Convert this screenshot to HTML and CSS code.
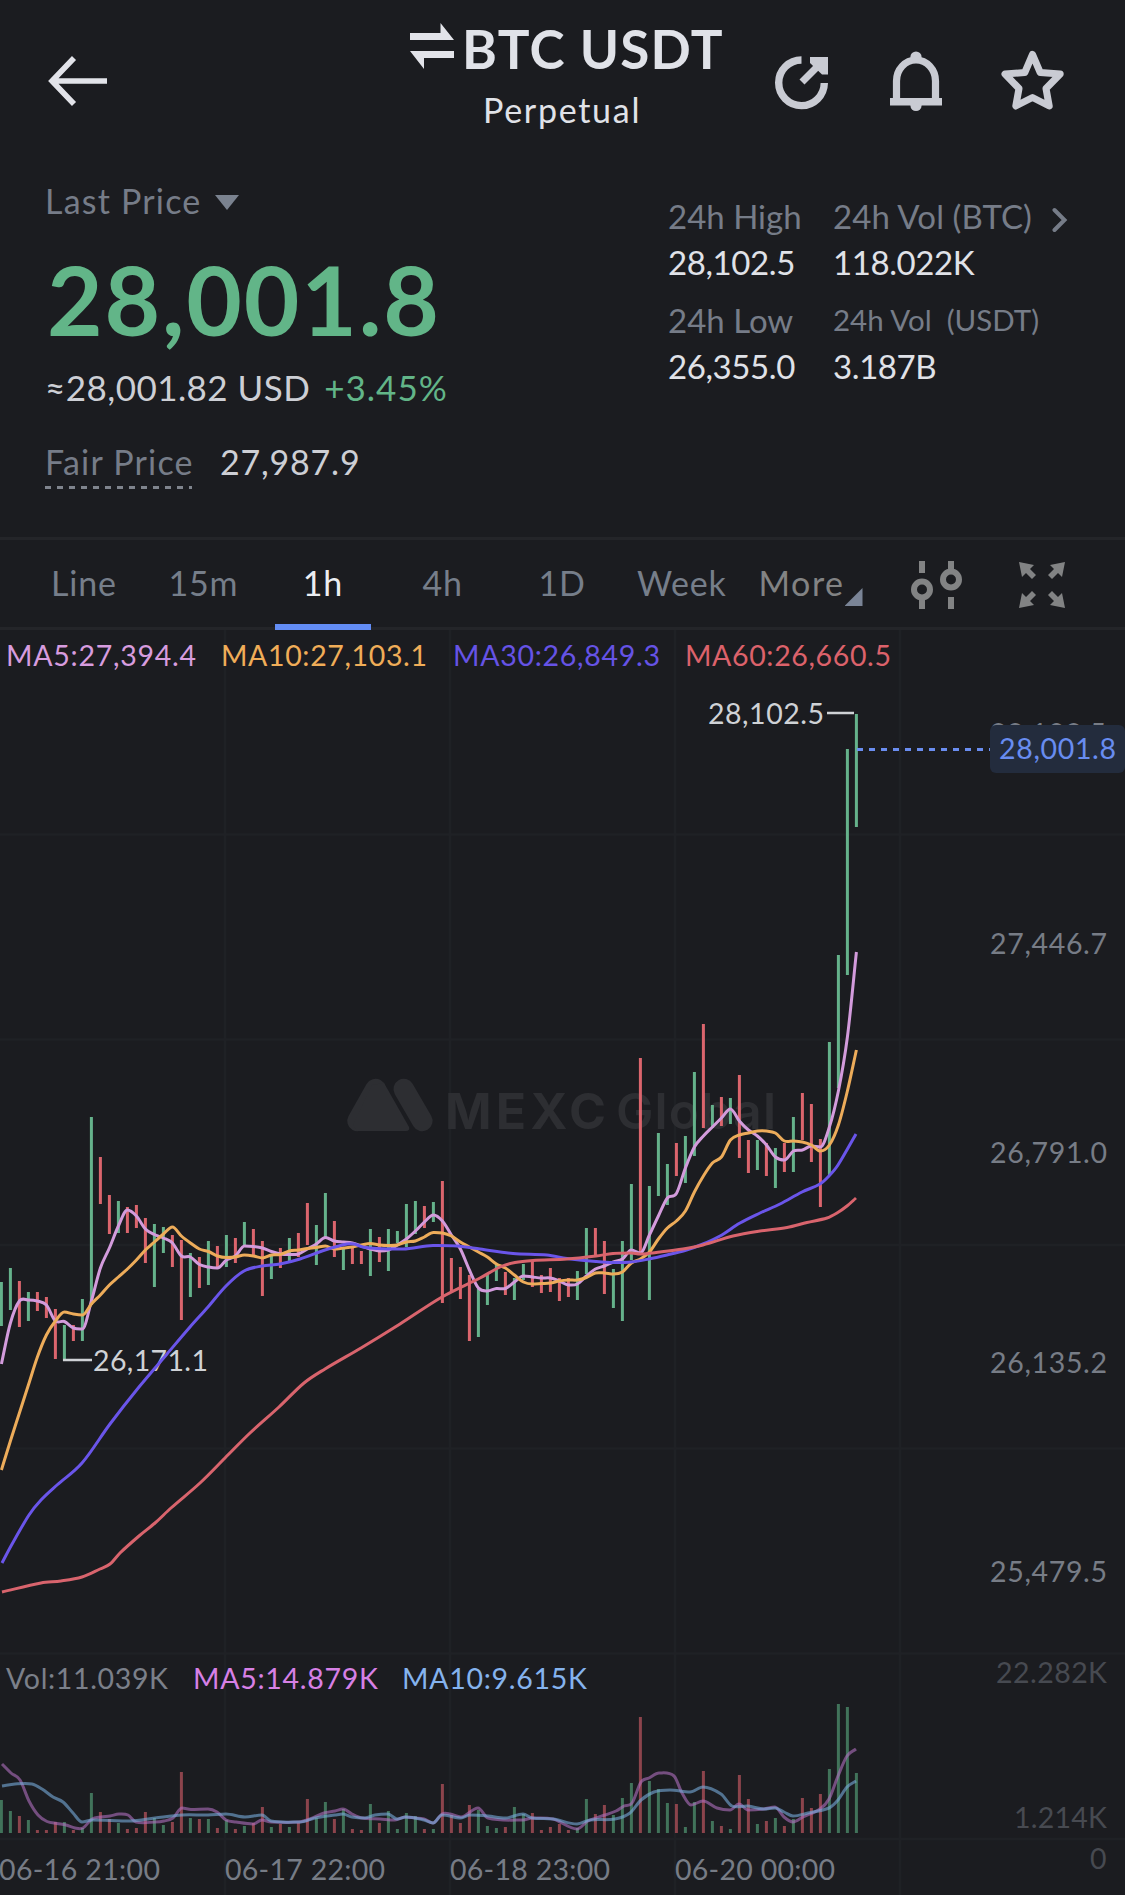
FILE: index.html
```html
<!DOCTYPE html>
<html lang="en">
<head>
	<meta charset="UTF-8">
	<title>BTC USDT Perpetual</title>
	<link rel="stylesheet" href="styles.css">
</head>
<body>
	<header class="header">
		<svg class="back" width="60" height="52" viewBox="48 55 60 52">
			<path d="M107 81H53M74 58L52 81l22 23" fill="none" stroke="#e2e3e9" stroke-width="5.6"/>
		</svg>
		<div class="title">
			<h1>
				<svg class="swap" width="44" height="46" viewBox="410 23 44 46">
					<path d="M410 33h30.500V23L454 40H410zM454 58h-30v11L410 51h44z" fill="#e2e3e9"/>
				</svg>
				<span>BTC USDT</span>
			</h1>
			<p>Perpetual</p>
		</div>
		<div class="icons">
			<svg width="54" height="62" viewBox="775 50 54 62">
				<path d="M801.500 60A22.800 22.800 0 1 0 824.300 83" fill="none" stroke="#c9cbd3" stroke-width="7.400"/>
				<path d="M802 82l20-20" stroke="#c9cbd3" stroke-width="7"/>
				<path d="M810 57h18v17.500h-6L810 63z" fill="#c9cbd3"/>
			</svg>
			<svg width="52" height="62" viewBox="890 50 52 62">
				<path d="M896.500 100V81a19.500 21 0 0 1 39 0v19" fill="none" stroke="#c9cbd3" stroke-width="7.200"/>
				<path d="M890 98h52v7.500h-52z" fill="#c9cbd3"/>
				<circle cx="916" cy="57" r="5.600" fill="#c9cbd3"/>
				<circle cx="916" cy="105.500" r="5.600" fill="#c9cbd3"/>
			</svg>
			<svg width="64" height="62" viewBox="1000 50 64 62">
				<path d="M1032.500 54.500l7.700 18 20 1.500-14.200 14.500 3.200 17.500-16.700-8.500-16.700 8.500 3.200-17.500L1005 74l19.800-1.500z" fill="none" stroke="#c9cbd3" stroke-width="7" stroke-linejoin="round"/>
			</svg>
		</div>
	</header>

	<section class="summary">
		<div class="price">
			<div class="last">Last Price <i class="arrow-down"></i></div>
			<div class="big">28,001.8</div>
			<div class="approx"><span>≈28,001.82 USD</span><span class="up">+3.45%</span></div>
			<div class="fair"><span class="label">Fair Price</span><span class="value">27,987.9</span></div>
		</div>
		<dl class="stats">
			<div>
				<dt>24h High</dt>
				<dd>28,102.5</dd>
				<dt>24h Low</dt>
				<dd>26,355.0</dd>
			</div>
			<div>
				<dt class="vol">24h Vol (BTC)
					<svg class="chevron" width="16" height="26" viewBox="0 0 16 26"><path d="M2.500 3l10 10-10 10" fill="none" stroke="#767c88" stroke-width="4" stroke-linecap="round"/></svg>
				</dt>
				<dd>118.022K</dd>
				<dt class="small">24h Vol&nbsp; (USDT)</dt>
				<dd>3.187B</dd>
			</div>
		</dl>
	</section>

	<nav class="tabs">
		<a class="tab">Line</a>
		<a class="tab">15m</a>
		<a class="tab active">1h</a>
		<a class="tab">4h</a>
		<a class="tab">1D</a>
		<a class="tab">Week</a>
		<a class="more">More<i class="corner"></i></a>
		<svg class="sliders" width="52" height="50" viewBox="910 560 52 50">
			<g fill="none" stroke="#828384" stroke-width="6">
				<path d="M921 561v12M921 599v10M950 561v9M950 597v12"/>
				<circle cx="921" cy="589.500" r="8"/>
				<circle cx="950" cy="579.500" r="8"/>
			</g>
		</svg>
		<svg class="expand" width="46" height="46" viewBox="0 0 46 46">
			<g fill="#828384">
				<path id="corner" d="M0 0l15 3-4 4 6 6-4 4-6-6-4 4z"/>
				<use href="#corner" transform="matrix(-1 0 0 1 46 0)"/>
				<use href="#corner" transform="matrix(1 0 0 -1 0 46)"/>
				<use href="#corner" transform="matrix(-1 0 0 -1 46 46)"/>
			</g>
		</svg>
	</nav>

	<svg class="chart" width="1125" height="1265" viewBox="0 630 1125 1265">
		<path class="grid" d="M0 834.500H1125M0 1039.500H1125M0 1245H1125M0 1448.500H1125M0 1653.500H1125M0 1839H1125M225 630V1895M450 630V1895M675 630V1895M900 630V1895"/>

		<g class="watermark">
			<path d="M375.500 1089L357.500 1121M403.700 1089l18.600 32" stroke-width="20.500" stroke-linecap="round"/>
			<path d="M384 1083l25 44q1 4-3 4h-49l-4-6 19-40z" stroke="none"/>
			<text x="445" y="1129" textLength="161">MEXC</text>
			<text class="regular" x="616" y="1129" textLength="160">Global</text>
		</g>

		<g id="candles"></g>
		<path class="callout" d="M63 1360H92M827 713H854"/>
		<g class="mark">
			<text x="93" y="1370.500" textLength="115">26,171.1</text>
			<text x="708" y="724" textLength="116">28,102.5</text>
		</g>
		<g id="lines"></g>

		<g class="legend">
			<text x="6" y="665.500" textLength="190" fill="#d79cdf">MA5:27,394.4</text>
			<text x="221" y="665.500" textLength="206" fill="#f0ad58">MA10:27,103.1</text>
			<text x="453" y="665.500" textLength="207" fill="#6653e6">MA30:26,849.3</text>
			<text x="685" y="665.500" textLength="206" fill="#dc626b">MA60:26,660.5</text>
			<text x="6" y="1689" textLength="162" fill="#7b808a">Vol:11.039K</text>
			<text x="193" y="1689" textLength="185" fill="#d780e6">MA5:14.879K</text>
			<text x="402" y="1689" textLength="185" fill="#85b3ee">MA10:9.615K</text>
		</g>

		<g class="axis">
			<text x="990" y="744" textLength="116">28,102.5</text>
			<text x="990" y="954" textLength="117">27,446.7</text>
			<text x="990" y="1163" textLength="117">26,791.0</text>
			<text x="990" y="1373" textLength="117">26,135.2</text>
			<text x="990" y="1582" textLength="117">25,479.5</text>
			<g class="dim">
				<text x="996" y="1683" textLength="111">22.282K</text>
				<text x="1014" y="1828" textLength="93">1.214K</text>
				<text x="1090" y="1869">0</text>
			</g>
			<text x="-1" y="1879.500" textLength="161">06-16 21:00</text>
			<text x="225" y="1879.500" textLength="160">06-17 22:00</text>
			<text x="450" y="1879.500" textLength="160">06-18 23:00</text>
			<text x="675" y="1879.500" textLength="160">06-20 00:00</text>
		</g>

		<g class="current">
			<path d="M857 749.500H990"/>
			<rect x="990" y="725" width="135" height="48" rx="6"/>
			<text x="999" y="759" textLength="117">28,001.8</text>
		</g>
	</svg>
	<script src="chart.js"></script>
</body>
</html>
```

FILE: styles.css
```css
* {
	margin: 0;
	padding: 0;
	box-sizing: border-box;
}
body {
	width: 1125px;
	height: 1895px;
	overflow: hidden;
	background: #1b1c20;
	color: #e0e2e8;
	font-family: Lato, "Open Sans", sans-serif;
	font-size: 34px;
}
svg {
	display: block;
	flex: none;
}

/* header */
.header {
	height: 150px;
	display: grid;
	grid-template-columns: 362px 314px 1fr;
	padding-left: 48px;
}
.back {
	margin-top: 55px;
}
.title {
	padding-top: 17px;
}
.title h1 {
	display: flex;
	font-size: 53px;
	line-height: 64px;
	white-space: nowrap;
	letter-spacing: 1.2px;
}
.title .swap {
	margin: 6px 8px 0 0;
}
.title p {
	margin-top: 7px;
	padding-left: 73px;
	line-height: 44px;
	letter-spacing: 1.7px;
}
.icons {
	display: flex;
	padding: 50px 0 0 51px;
}
.icons svg + svg {
	margin-left: 61px;
}
.icons svg + svg + svg {
	margin-left: 58px;
}

/* price summary */
.summary {
	height: 387px;
	display: flex;
	padding-left: 45px;
}
.price {
	width: 623px;
	padding-top: 28px;
	color: #cdcfd5;
}
.last {
	display: flex;
	align-items: center;
	height: 44px;
	color: #767c88;
	letter-spacing: 1.2px;
}
.arrow-down {
	margin: 4px 0 0 14px;
	border: 12px solid transparent;
	border-top: 15px solid #7a828f;
	border-bottom: 0;
}
.big {
	margin: 27px 0 0 2px;
	font-size: 96px;
	font-weight: bold;
	line-height: 100px;
	letter-spacing: 1.800px;
	color: #62b588;
}
.approx {
	display: flex;
	margin-top: 16px;
	font-size: 35px;
	line-height: 44px;
	letter-spacing: 0.450px;
}
.approx .up {
	margin-left: 14px;
	letter-spacing: 1px;
	color: #62b588;
}
.fair {
	display: flex;
	margin-top: 31px;
	line-height: 44px;
}
.fair .label {
	width: 147px;
	height: 49px;
	margin-right: 28px;
	color: #767c88;
	letter-spacing: 1.200px;
	white-space: nowrap;
	background: repeating-linear-gradient(90deg, #7f848d 0, #7f848d 6px, transparent 6px, transparent 12px) 0 100% / 100% 3px no-repeat;
}
.fair .value {
	letter-spacing: 0.800px;
}
.stats {
	display: flex;
	padding-top: 46px;
	font-size: 33px;
	line-height: 40px;
	white-space: nowrap;
}
.stats > div {
	width: 165px;
}
.stats dt {
	color: #767c88;
}
.stats dd {
	margin: 6px 0 18px;
	letter-spacing: -0.400px;
}
.stats .vol {
	display: flex;
	letter-spacing: 0.100px;
}
.stats .chevron {
	margin: 11px 0 0 20px;
}
.stats .small {
	font-size: 29.500px;
}

/* interval tabs */
.tabs {
	height: 93px;
	display: flex;
	padding-left: 24px;
	border-top: 3px solid #242529;
	border-bottom: 3px solid #242529;
	line-height: 86px;
	color: #767e8a;
}
.tab {
	width: 119.600px;
	height: 90px;
	text-align: center;
	letter-spacing: 0.800px;
}
.tab.active {
	color: #eceef2;
	background: linear-gradient(#638df5, #638df5) center bottom / 96px 6px no-repeat;
}
.more {
	display: flex;
	width: 152px;
	margin-left: 17px;
	color: #828384;
	letter-spacing: 1.500px;
}
.corner {
	width: 18px;
	height: 18px;
	margin-top: 48px;
	background: #7a8496;
	clip-path: polygon(100% 0, 100% 100%, 0 100%);
}
.sliders {
	margin-top: 20px;
}
.expand {
	margin: 22px 0 0 56px;
}

/* chart */
.chart text {
	font-size: 28.500px;
}
.grid {
	fill: none;
	stroke: #1f2125;
	stroke-width: 2.500;
}
.watermark {
	fill: #2d2e32;
	stroke: #2d2e32;
}
.chart .watermark text {
	font-family: Inter, sans-serif;
	font-size: 50px;
	font-weight: 700;
	stroke: none;
}
.chart .watermark .regular {
	font-weight: 600;
}
.callout {
	stroke: #cfd2d6;
	stroke-width: 2.500;
}
.mark {
	fill: #cfd2d6;
}
.axis {
	fill: #777c86;
}
.axis .dim {
	fill: #474a51;
}
.line {
	fill: none;
	stroke-width: 3;
	stroke-linejoin: round;
}
.faded {
	opacity: 0.6;
}
.current path {
	stroke: #6a8df0;
	stroke-width: 3;
	stroke-dasharray: 6 6;
}
.current rect {
	fill: #232c3d;
}
.current text {
	fill: #688cf0;
}
```

FILE: chart.js
```js
// one row per hour: colour, high y, low y, top of the volume bar
const bars = `g 1282 1326 1800,g 1268 1310 1811,r 1281 1327 1816,g 1292 1321 1820,r 1292 1311 1830,r 1297 1318 1830,r 1309 1359 1822,g 1325 1361 1822
r 1325 1341 1830,g 1299 1341 1828,g 1117 1305 1793,r 1157 1204 1812,r 1195 1234 1819,g 1201 1233 1823,r 1207 1233 1829,r 1205 1228 1828
r 1218 1263 1812,g 1224 1287 1818,g 1227 1253 1825,r 1235 1267 1822,r 1240 1320 1772,g 1253 1297 1818,r 1257 1288 1819,g 1241 1285 1819
r 1246 1267 1828,g 1235 1267 1820,r 1238 1263 1829,g 1222 1245 1826,r 1229 1255 1823,r 1241 1296 1807,g 1255 1279 1827,r 1248 1268 1824
g 1238 1263 1827,r 1233 1257 1823,r 1203 1245 1799,g 1225 1265 1818,g 1193 1237 1802,r 1221 1257 1819,g 1248 1270 1809,r 1247 1264 1829
r 1251 1264 1830,g 1229 1276 1804,r 1237 1262 1823,g 1229 1271 1811,g 1231 1243 1829,g 1204 1247 1813,g 1201 1234 1816,r 1206 1228 1829
g 1202 1222 1829,r 1181 1303 1784,r 1258 1291 1815,r 1267 1299 1823,r 1275 1341 1805,g 1289 1337 1810,g 1274 1305 1826,g 1265 1281 1828
r 1272 1295 1827,g 1278 1300 1807,g 1264 1280 1814,r 1260 1287 1813,r 1275 1293 1830,r 1268 1292 1827,r 1278 1301 1824,r 1278 1297 1830
g 1271 1300 1828,g 1228 1274 1799,r 1228 1256 1814,r 1241 1294 1805,g 1269 1308 1815,g 1241 1321 1798,g 1184 1260 1783,r 1058 1255 1717
g 1186 1300 1781,g 1133 1196 1789,g 1164 1205 1803,r 1143 1176 1804,g 1136 1183 1827,g 1072 1156 1802,r 1024 1128 1771,g 1105 1128 1821
r 1097 1126 1826,g 1098 1124 1829,r 1075 1158 1775,r 1140 1173 1799,g 1140 1170 1824,r 1143 1176 1821,g 1148 1188 1818,r 1143 1172 1826
g 1117 1172 1819,r 1093 1140 1798,r 1104 1162 1808,r 1139 1207 1794,g 1042 1176 1769,g 955 1088 1704,g 749 975 1707,g 714 827 1773`.split(/[,\n]/);

const ma5 = [1364, 1323, 1301, 1300, 1301, 1305, 1321, 1321.5, 1328, 1329, 1301, 1268, 1248, 1226, 1210, 1216, 1229, 1234.5, 1238, 1243, 1256, 1257, 1264.5, 1267, 1268, 1260, 1256, 1246, 1246.5, 1248, 1251.5, 1254, 1254.5, 1254, 1249, 1244, 1237.5, 1241, 1242, 1243, 1246, 1249, 1251, 1250, 1245, 1239, 1231, 1222, 1215, 1221, 1235, 1249, 1270, 1288, 1291, 1288.5, 1288.5, 1282, 1276, 1277, 1278, 1278, 1281, 1285, 1284, 1276, 1269, 1266, 1262, 1259, 1250, 1253, 1235, 1216, 1198, 1193.5, 1168, 1147, 1136, 1127, 1118, 1109, 1121, 1130, 1136, 1145, 1157, 1160, 1151, 1150, 1146, 1147, 1127, 1091, 1037, 952];
const ma10 = [1470, 1441, 1413, 1385, 1357, 1335, 1321, 1312, 1314, 1315, 1304, 1295, 1285, 1277, 1269, 1260, 1250, 1242, 1234, 1227, 1236, 1243, 1249, 1251.5, 1256, 1257.5, 1257, 1255, 1256, 1258, 1255, 1254.5, 1251, 1250, 1248.5, 1247.5, 1246, 1249, 1248, 1247, 1245, 1243.5, 1245, 1245.5, 1245, 1242, 1241, 1237, 1232.5, 1233, 1236, 1242, 1247, 1252, 1257, 1264, 1268, 1275, 1282, 1284, 1283.5, 1283, 1281, 1280, 1280, 1277.5, 1273, 1273, 1274, 1272, 1263, 1259, 1252, 1239, 1228, 1221, 1211, 1192, 1176, 1163, 1157, 1140, 1135, 1133, 1131, 1131, 1133, 1141, 1141, 1142, 1145, 1151, 1145, 1125, 1091, 1050];

// the slow averages are stored as x,y pairs
const ma30 = "2,1563 11,1546 29,1515 41,1500 57,1485 82,1463 110,1424 139,1387 167,1354 190,1327 208,1307 226,1286 244,1271 262,1266 280,1264 300,1259 325,1250 347,1244 354,1244 363,1247 377,1248.5 403,1249 433,1245.5 457,1246 480,1249 513,1253.5 547,1255 567,1258.5 596,1261.5 613,1262.5 631,1262 649,1259 667,1255 685,1250.5 703,1244 720,1236 740,1223 760,1213 780,1204 802,1192 820,1184 829,1176 838,1165 856,1134";
const ma60 = "2,1592 41,1583 61,1581 82,1577 100,1569 110,1564 120,1553 139,1536 155,1523 171,1508 200,1483 225,1458 250,1433 279,1407 304,1383 325,1369 361,1348 400,1324 442,1297 480,1278 500,1267 515,1262.5 533,1260.5 567,1259 596,1256 613,1253.5 631,1253 640,1254 660,1252 683,1249 703,1245 733,1236 760,1231 787,1227.5 807,1222.5 827,1218 837,1213 847,1206 856,1198";
const vol5 = "2,1764 11,1773 20,1780 29,1801 38,1815 47,1821.5 57,1823.5 66,1825 75,1828 83,1828 92,1819 101,1817 110,1816 119,1814 128,1815 136,1822 155,1822 164,1821 173,1818 182,1808 191,1809.5 208,1809 217,1812 226,1820 236,1822 253,1824 262,1820 271,1822 299,1822 310,1819 324,1813 335,1811 343,1809 352,1814 362,1818 380,1819 395,1820 405,1817 415,1818 424,1819 433,1823 442,1814 450,1814 461,1817 478,1808 488,1818 523,1820 532,1818 553,1819 577,1829 588,1821 605,1815 616,1811 624,1806 632,1803 641,1782 649,1778 659,1773 674,1776 682,1793 691,1805 703,1801 717,1808 730,1810 739,1804 748,1810 764,1809 775,1807 784,1817 793,1822 803,1817 820,1809 829,1799 838,1776 847,1756 856,1749";
const vol10 = "2,1786 15,1784 32,1784 42,1789 53,1797 63,1802 73,1813 82,1822 92,1820 130,1821 155,1818 182,1815 208,1815 226,1814 245,1817 262,1815 271,1821 300,1822 315,1818 335,1815 343,1814 352,1817 365,1818 375,1815 388,1814 397,1819 406,1817 424,1820 433,1823 442,1815 461,1818 470,1815 488,1816 505,1818 523,1814 532,1818 553,1819 577,1824 590,1820 615,1819 630,1813 641,1800 654,1792 670,1790 690,1792 703,1787 721,1794 732,1806 748,1806 764,1809 775,1808 784,1812 793,1816 808,1813 829,1808 838,1800 847,1787 856,1781";

function barX(i) {
	return 1.4 + i * 9;
}

function pairs(text) {
	return text.split(" ").map(p => p.split(",").map(Number));
}

// smooth curve through the points, flat at local highs and lows
function curve(p) {
	const n = p.length;
	const slope = p.map((c, i) => {
		const a = p[Math.max(i - 1, 0)];
		const b = p[Math.min(i + 1, n - 1)];
		if ((c[1] - a[1]) * (b[1] - c[1]) < 0) {
			return 0;
		}
		return (b[1] - a[1]) / (b[0] - a[0]);
	});
	let d = "M" + p[0];
	for (let i = 1; i < n; i++) {
		const h = (p[i][0] - p[i - 1][0]) / 3;
		d += ` C${p[i - 1][0] + h},${p[i - 1][1] + slope[i - 1] * h} ${p[i][0] - h},${p[i][1] - slope[i] * h} ${p[i]}`;
	}
	return d;
}

function line(points, color, cls) {
	return `<path class="line ${cls || ""}" d="${curve(points)}" stroke="${color}"/>`;
}

document.getElementById("candles").innerHTML = bars.map((row, i) => {
	const [c, high, low, vol] = row.split(" ");
	const x = barX(i) - 1.5;
	const fill = c === "g" ? "#65b28b" : "#db656d";
	const volFill = c === "g" ? "#41735a" : "#8c444c";
	return `<rect x="${x}" y="${high}" width="3" height="${low - high}" fill="${fill}"/>
		<rect x="${x}" y="${vol}" width="3" height="${1833 - vol}" fill="${volFill}"/>`;
}).join("");

document.getElementById("lines").innerHTML =
	line(ma5.map((y, i) => [barX(i), y]), "#d39bdc") +
	line(ma10.map((y, i) => [barX(i), y]), "#edac5a") +
	line(pairs(ma30), "#6a55ea") +
	line(pairs(ma60), "#d9646d") +
	line(pairs(vol5), "#b070c0", "faded") +
	line(pairs(vol10), "#78acdc", "faded");
```
